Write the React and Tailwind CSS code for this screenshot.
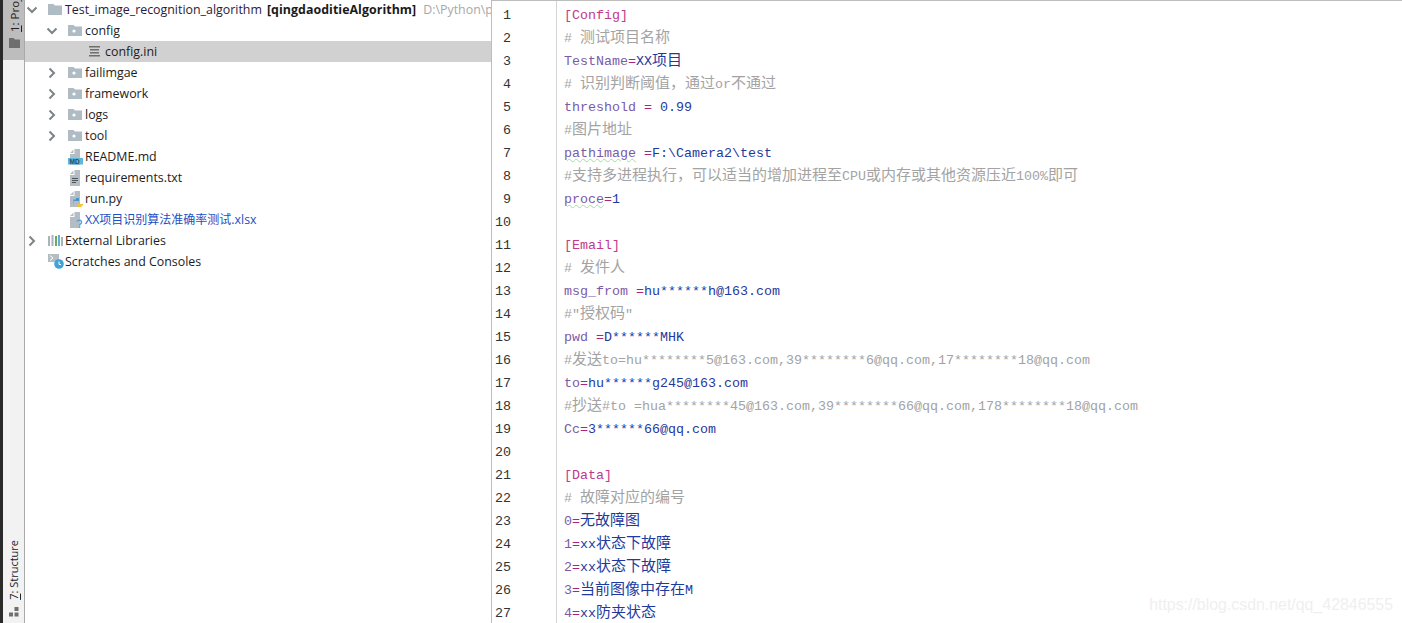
const KEY = "text-[#7a5ba8]";
const EQ = "text-[#a8267e]";
const VAL = "text-[#1f3a9e]";
const COM = "text-[#a3a3a3]";
const SEC = "text-[#c0398c]";

// [text, colour] pieces for every line of config.ini
const lines = [
  [["[Config]", SEC]],
  [["# 测试项目名称", COM]],
  [["TestName", KEY], ["=", EQ], ["XX项目", VAL]],
  [["# 识别判断阈值，通过or不通过", COM]],
  [["threshold", KEY], [" = ", EQ], ["0.99", VAL]],
  [["#图片地址", COM]],
  [["pathimage", KEY, true], [" =", EQ], ["F:\\Camera2\\test", VAL]],
  [["#支持多进程执行，可以适当的增加进程至CPU或内存或其他资源压近100%即可", COM]],
  [["proce", KEY, true], ["=", EQ], ["1", VAL]],
  [],
  [["[Email]", SEC]],
  [["# 发件人", COM]],
  [["msg_from ", KEY], ["=", EQ], ["hu******h@163.com", VAL]],
  [["#″授权码″", COM]],
  [["pwd ", KEY], ["=", EQ], ["D******MHK", VAL]],
  [["#发送to=hu********5@163.com,39********6@qq.com,17********18@qq.com", COM]],
  [["to", KEY], ["=", EQ], ["hu******g245@163.com", VAL]],
  [["#抄送#to =hua********45@163.com,39********66@qq.com,178********18@qq.com", COM]],
  [["Cc", KEY], ["=", EQ], ["3******66@qq.com", VAL]],
  [],
  [["[Data]", SEC]],
  [["# 故障对应的编号", COM]],
  [["0", KEY], ["=", EQ], ["无故障图", VAL]],
  [["1", KEY], ["=", EQ], ["xx状态下故障", VAL]],
  [["2", KEY], ["=", EQ], ["xx状态下故障", VAL]],
  [["3", KEY], ["=", EQ], ["当前图像中存在M", VAL]],
  [["4", KEY], ["=", EQ], ["xx防夹状态", VAL]],
];

// CJK runs 15px per glyph, latin 8px, so they need separate sizes
function Mixed({ text }) {
  return text.split(/([\u3000-\u9fff\uff00-\uffef]+)/).map((part, i) =>
    i % 2 === 1 ? (
      <span key={i} className="text-[15px] leading-[0] font-['Noto_Sans_CJK_SC',sans-serif]">
        {part}
      </span>
    ) : (
      <span key={i}>{part}</span>
    )
  );
}

function Chevron({ open }) {
  return (
    <svg width="12" height="12" viewBox="0 0 12 12" fill="none" stroke="#7b8488" strokeWidth="2">
      {open ? <path d="M1.5 3.5 L6 8 L10.5 3.5" /> : <path d="M3.5 1.5 L8 6 L3.5 10.5" />}
    </svg>
  );
}

function Folder({ dot }) {
  return (
    <svg width="14" height="11" viewBox="0 0 14 11">
      <path d="M0 0 H5.5 L7 1.5 H14 V11 H0 Z" fill="#b0bcc3" />
      {dot && <circle cx="6" cy="6" r="1.6" fill="#fff" />}
    </svg>
  );
}

function FileBase({ children }) {
  return (
    <svg width="15" height="16" viewBox="0 0 15 16">
      <path d="M2 5 H6.5 V0 H12 V16 H2 Z" fill="#b4bdc3" />
      <path d="M2 4 L5.5 0.5 V4 Z" fill="#b4bdc3" />
      {children}
    </svg>
  );
}

const icons = {
  folder: <Folder />,
  folderDot: <Folder dot />,
  ini: (
    <svg className="ml-[1px]" width="12" height="11" viewBox="0 0 12 11" fill="#6f6f6f">
      <rect x="0" y="0" width="11" height="1.5" />
      <rect x="1" y="3" width="9" height="1.5" />
      <rect x="1" y="6" width="9" height="1.5" />
      <rect x="0" y="9" width="11" height="1.5" />
    </svg>
  ),
  md: (
    <FileBase>
      <rect x="0" y="9" width="15" height="6.5" fill="#5fb8dc" />
      <text x="1.5" y="14.6" fontSize="6.5" fontWeight="700" fill="#2b4a5c" fontFamily="Liberation Sans">MD</text>
    </FileBase>
  ),
  txt: (
    <FileBase>
      <path d="M4 8.5 H10 M4 10.5 H10 M4 12.5 H8" stroke="#4d5357" strokeWidth="1" />
    </FileBase>
  ),
  py: (
    <FileBase>
      <path d="M5 14 V10 H11 V7 H8 V8.5 H5.5 V10 Z" fill="#4a93c9" />
      <path d="M15 9 V13 H10 V16 H13.5 V14.5 H15 Z" fill="#f1c432" />
    </FileBase>
  ),
  unknown: (
    <FileBase>
      <path d="M9 9.5 C10 7.5 14 8 13.5 10.5 C13.2 12 11.5 12 11.5 13.5" fill="none" stroke="#4ea6d8" strokeWidth="1.4" />
      <rect x="10.8" y="14.4" width="1.5" height="1.5" fill="#4ea6d8" />
    </FileBase>
  ),
  libs: (
    <svg width="15" height="11" viewBox="0 0 15 11">
      <rect x="0" y="1" width="2" height="10" fill="#a9b4ba" />
      <rect x="3.5" y="0" width="2" height="11" fill="#a9b4ba" />
      <rect x="7" y="1" width="2" height="10" fill="#73a857" />
      <rect x="10" y="0" width="2" height="11" fill="#5bb2dc" />
      <rect x="13" y="2" width="2" height="9" fill="#a9b4ba" />
    </svg>
  ),
  scratch: (
    <svg width="17" height="15" viewBox="0 0 17 15">
      <rect x="0" y="0" width="11" height="8" fill="#b4bdc3" />
      <path d="M2 1.5 L5 4 L2 6.5" fill="none" stroke="#fff" strokeWidth="1" />
      <circle cx="11" cy="10" r="4.8" fill="#3fa3d6" />
      <path d="M11 7.5 V10.5 H13" fill="none" stroke="#fff" strokeWidth="1" />
    </svg>
  ),
};

const tree = [
  { depth: 0, arrow: "open", icon: "folder", root: true },
  { depth: 1, arrow: "open", icon: "folderDot", label: "config" },
  { depth: 2, icon: "ini", label: "config.ini", selected: true },
  { depth: 1, arrow: "closed", icon: "folderDot", label: "failimgae" },
  { depth: 1, arrow: "closed", icon: "folderDot", label: "framework" },
  { depth: 1, arrow: "closed", icon: "folderDot", label: "logs" },
  { depth: 1, arrow: "closed", icon: "folderDot", label: "tool" },
  { depth: 1, icon: "md", label: "README.md" },
  { depth: 1, icon: "txt", label: "requirements.txt" },
  { depth: 1, icon: "py", label: "run.py" },
  { depth: 1, icon: "unknown", label: "XX", cjk: "项目识别算法准确率测试", ext: ".xlsx", blue: true },
  { depth: 0, arrow: "closed", icon: "libs", label: "External Libraries" },
  { depth: 0, icon: "scratch", label: "Scratches and Consoles" },
];

function TreeRow({ row }) {
  const pad = row.depth === 0 ? "pl-0" : row.depth === 1 ? "pl-[20px]" : "pl-[40px]";
  return (
    <div className={`flex h-[21px] items-center whitespace-nowrap ${pad} ${row.selected ? "bg-[#d1d1d1]" : ""}`}>
      <span className="flex w-[23px] shrink-0 justify-start pl-[1px]">
        {row.arrow && <Chevron open={row.arrow === "open"} />}
      </span>
      <span className="flex w-[17px] shrink-0 justify-start">{icons[row.icon]}</span>
      {row.root ? (
        <span className="pt-[2px]">
          <span className="text-[#2a1a3a]">Test_image_recognition_algorithm</span>
          <span className="ml-[5px] font-bold tracking-[0.05px] text-[#1a1a1a]">[qingdaoditieAlgorithm]</span>
          <span className="ml-[7px] text-[#a8a8a8]">D:\Python\project</span>
        </span>
      ) : (
        <span className={`pt-[2px] ${row.blue ? "text-[#1d4fc4]" : "text-[#1c1c1c]"}`}>
          {row.label}
          {row.cjk && <span className="text-[12px] leading-[0] font-['Noto_Sans_CJK_SC',sans-serif]">{row.cjk}</span>}
          {row.ext}
        </span>
      )}
    </div>
  );
}

export default function App() {
  return (
    <div className="relative flex h-[623px] w-[1402px] overflow-hidden bg-white font-['Open_Sans',sans-serif] text-[12.4px]">
      <div className="w-[3px] shrink-0 bg-[#2a2a2a]" />

      {/* tool window strip */}
      <div className="flex w-[22px] shrink-0 flex-col border-r border-[#a9a9a9] bg-[#f2f2f2]">
        <div className="flex h-[60px] flex-col items-center justify-end overflow-hidden bg-[#bdbdbd] pb-[12px] pl-[2px]">
          <span className="flex h-[38px] justify-start overflow-hidden">
            <span className="whitespace-nowrap text-[11.5px] text-[#222] [writing-mode:vertical-rl] rotate-180">
              <u>1</u>: Project
            </span>
          </span>
          <svg className="mt-[6px] shrink-0" width="11" height="10" viewBox="0 0 11 10" fill="#6e6e6e">
            <path d="M0 0 H4.5 L6 1.5 H11 V10 H0 Z" />
          </svg>
        </div>
        <div className="mt-auto flex flex-col items-center pb-[6px] pl-[1px]">
          <span className="whitespace-nowrap text-[11px] text-[#222] [writing-mode:vertical-rl] rotate-180">
            <u>7</u>: Structure
          </span>
          <svg className="mt-[7px]" width="10" height="10" viewBox="0 0 10 10" fill="#6e6e6e">
            <rect x="5.5" y="0" width="4" height="4" />
            <rect x="0" y="5.5" width="4" height="4" />
            <rect x="5.5" y="5.5" width="4" height="4" />
          </svg>
        </div>
      </div>

      {/* project tree */}
      <div className="-mt-[1px] w-[466px] shrink-0 overflow-hidden">
        {tree.map((row, i) => (
          <TreeRow key={i} row={row} />
        ))}
      </div>

      {/* editor */}
      <div className="flex min-w-0 flex-1 border-l border-t border-[#bdbdbd] font-['Liberation_Mono',monospace] text-[13.33px]">
        <div className="w-[65px] shrink-0 border-r border-[#d4d4d4] pt-[3px] pr-[45px] text-right text-[#333]">
          {lines.map((_, i) => (
            <div key={i} className="h-[23px] leading-[23px]">{i + 1}</div>
          ))}
        </div>
        <div className="min-w-0 flex-1 pt-[3px] pl-[7px]">
          {lines.map((parts, i) => (
            <div key={i} className="h-[23px] whitespace-pre leading-[23px]">
              {parts.map(([text, color, typo], j) => (
                <span
                  key={j}
                  className={`${color} ${typo ? "underline decoration-wavy decoration-[#a5dca5] decoration-1" : ""}`}
                >
                  <Mixed text={text} />
                </span>
              ))}
            </div>
          ))}
        </div>
      </div>

      {/* csdn watermark */}
      <div className="absolute bottom-[6px] right-[9px] font-['Liberation_Sans',sans-serif] text-[15.9px] text-[#efefef]">
        https://blog.csdn.net/qq_42846555
      </div>
    </div>
  );
}
